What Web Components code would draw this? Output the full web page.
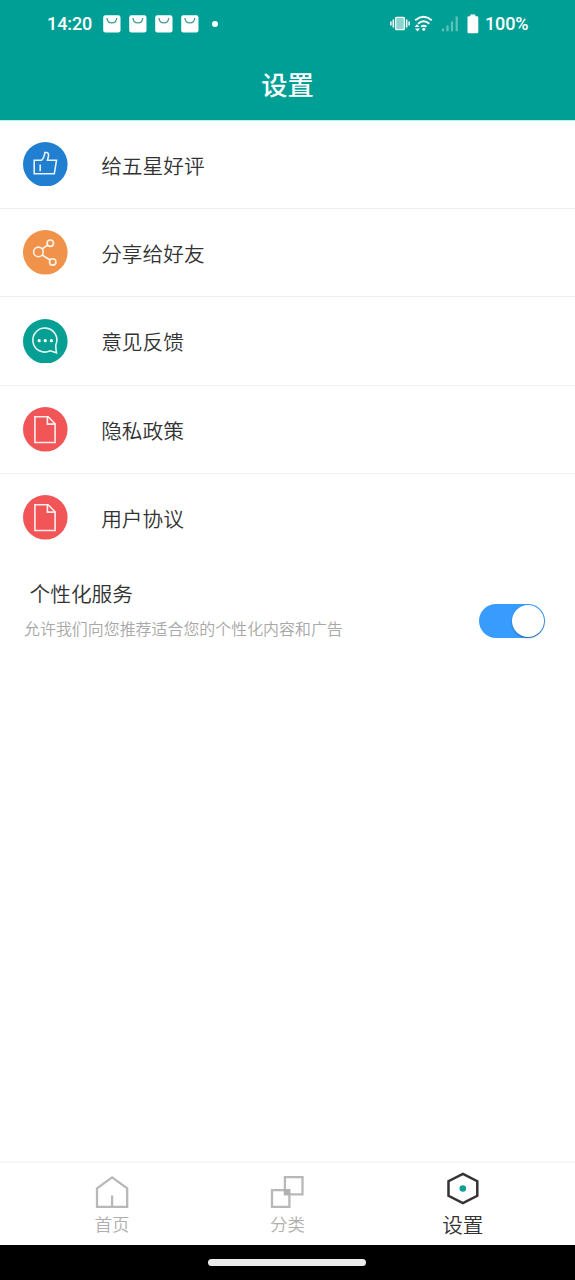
<!DOCTYPE html>
<html lang="zh-CN">
<head>
<meta charset="utf-8">
<title>设置</title>
<style>
html,body{margin:0;height:100%}
body{font-family:"Noto Sans CJK SC",sans-serif;font-weight:350;color:#333;background:#fff;overflow:hidden}
</style>
</head>
<body>
<settings-app></settings-app>
<script>
const define = (name, html) => customElements.define(name, class extends HTMLElement {
  constructor() {
    super();
    this.attachShadow({mode: 'open'}).innerHTML = typeof html === 'function' ? html(this) : html;
  }
});

const bag = `<svg width="18" height="18" viewBox="0 0 18 18"><rect x=".2" y=".2" width="17.3" height="17.3" rx="2.2" fill="#fff"/><path d="M4 3C4.4 9.6 13.3 9.6 13.7 3" fill="none" stroke="#3d9f97" stroke-width="1.3"/></svg>`;

define('status-bar', `
<style>
:host{display:flex;align-items:center;height:47px;padding:0 46.5px 0 47px;color:#fff;font:500 18px/46px Roboto,sans-serif}
svg{display:block;flex:none}
.time{width:56px;letter-spacing:-.1px}
.bags{display:flex;gap:7.9px}
.dot{width:6px;height:6px;border-radius:50%;background:#fff;margin-left:13px}
.right{display:flex;align-items:center;margin-left:auto}
.pct{margin-left:6px;letter-spacing:-.1px}
</style>
<span class="time">14:20</span>
<div class="bags">${bag.repeat(4)}</div>
<i class="dot"></i>
<div class="right">
<svg width="20" height="18" viewBox="0 0 20 18"><rect x="5.6" y="2.3" width="8.8" height="12.4" rx="1" fill="#fff" fill-opacity=".55" stroke="#fff" stroke-width="1.3"/><path d="M3.3 4.5v8M16.7 4.5v8M.9 6.5v4M19.1 6.5v4" stroke="#fff" stroke-width="1.5"/></svg>
<svg style="margin-left:4px" width="19" height="18" viewBox="0 0 19 18"><g fill="none" stroke="#fff" stroke-width="1.8"><path d="M1.2 5.2Q9.5-1.6 17.8 5.2M4 8.7Q9.7 3.8 15.3 8.7M7.2 11.8Q9.8 9.6 12.4 11.8"/></g><circle cx="9.8" cy="14.3" r="1.5" fill="#fff"/><path d="M.5 12L3 9.2 5.5 12zM1 13.5h5L3.5 16.4z" fill="#fff"/></svg>
<svg style="margin-left:8px" width="18" height="18" viewBox="0 0 18 18"><path d="M2 13.4v2.8M6.5 10.5v5.7M11 6.5v9.7M15.7 1.4v14.8" stroke="#62c2b9" stroke-width="2.2"/></svg>
<svg style="margin-left:8px" width="12" height="20" viewBox="0 0 12 20"><path d="M3.3.5h5v1.8h1.7q1.3 0 1.3 1.3v14.3q0 1.3-1.3 1.3H1.8q-1.3 0-1.3-1.3V3.6q0-1.3 1.3-1.3h1.5z" fill="#fff"/></svg>
<span class="pct">100%</span>
</div>`);

define('app-header', `
<style>
:host{display:block;height:121px;background:#009f95;border-bottom:1px solid #b9f2ef;box-sizing:border-box;flex:none}
h1{margin:0;text-align:center;color:#fff;font-size:26.3px;font-weight:500;line-height:74px}
</style>
<status-bar></status-bar><h1><slot></slot></h1>`);

const doc = ['#f15558', '<path d="M11.9 9.8h13.2l7 7v18.7H11.9zM24.4 10.2v6.9h7.4"/>'];
const glyphs = {
  like: ['#217fd2', '<path d="M11.2 18.3h7.2c2-1.5 3-4.5 3.5-7.8h1.9c1.6.3 2 1.8 1.7 3.3l-1 4.5h9l-2.2 13.5H11.2zM17.2 22.6v6.6"/>'],
  share: ['#f1924a', '<circle cx="15.4" cy="21.9" r="4.8"/><circle cx="27.3" cy="13.2" r="3.2"/><circle cx="29.7" cy="32" r="3.2"/><path d="M19.2 18.9l5.4-3.8M19.1 25l7.9 5"/>'],
  chat: ['#069f93', '<path d="M27.2 31.8A12 12 0 1 1 32.8 26q-.2 2 .7 7.8z"/><g fill="#fff" stroke="none"><circle cx="16.2" cy="21.7" r="1.6"/><circle cx="22.2" cy="21.7" r="1.6"/><circle cx="28.4" cy="21.7" r="1.6"/></g>'],
  doc
};

define('setting-row', el => {
  const [color, art] = glyphs[el.getAttribute('icon')];
  return `
<style>
:host{display:flex;align-items:center;height:88.4px;box-sizing:border-box;padding-left:23.2px;border-bottom:1px solid #efefef;font-size:20.7px;line-height:30px}
:host(:last-of-type){border-color:transparent}
svg{display:block;flex:none;margin-right:33.4px}
.art{fill:none;stroke:#fff;stroke-opacity:.9;stroke-width:1.6}
span{padding-top:1px}
</style>
<svg width="44.6" height="44.6" viewBox="0 0 44.6 44.6"><circle cx="22.3" cy="22.3" r="22.3" fill="${color}"/><g class="art">${art}</g></svg>
<span><slot></slot></span>`;
});

define('toggle-switch', `
<style>
:host{display:block;width:66.5px;height:34px;border-radius:17px;background:#389cff;box-sizing:border-box;padding:1px}
i{display:block;width:32px;height:32px;border-radius:50%;background:#fff;margin-left:auto;box-shadow:0 1px 2px rgba(0,0,0,.35)}
</style><i></i>`);

define('personal-service', `
<style>
:host{display:flex;justify-content:space-between;padding:16px 29.7px 0 24px}
.title{font-size:20.7px;line-height:30px;padding-left:5.5px}
.note{font-size:15.95px;line-height:24px;color:#a8a8a8;margin-top:7.6px}
toggle-switch{margin-top:25.4px}
</style>
<div><div class="title"><slot name="title"></slot></div><div class="note"><slot></slot></div></div>
<toggle-switch></toggle-switch>`);

const tabs = {
  home: '<path d="M2 13.4L17.1 2.4l15.1 11v18.4H2zM17.1 32v-11.5" fill="none" stroke="#b8b8b8" stroke-width="2.3"/>',
  grid: '<path d="M14.9 2.2h17.6v17.2H14.9zM2 15.1h17.4v16.8H2z" fill="none" stroke="#b8b8b8" stroke-width="2.3"/><path d="M14 14.3h5.8v5.4H14z" fill="#b0b0b0"/>',
  gear: '<path d="M17.2 2.2L31.6 9.5v14.6L17.2 31.4 2.8 24.1V9.5z" transform="translate(-.3 -.3)" fill="none" stroke="#333" stroke-width="2.5"/><circle cx="16.8" cy="16.5" r="3.3" fill="#0fa095"/>'
};

define('tab-item', el => `
<style>
:host{display:flex;flex-direction:column;align-items:center;justify-content:flex-end;width:175.4px;color:#b0b0b0;font-size:17.5px;line-height:26px;padding-bottom:8px;box-sizing:border-box}
:host([active]){color:#333;font-size:20.6px;line-height:30px;padding-bottom:6.5px}
svg{display:block;margin-bottom:2.5px}
:host([active]) svg{margin-bottom:2.9px}
</style>
<svg width="34.4" height="34" viewBox="0 0 34.4 34">${tabs[el.getAttribute('icon')]}</svg><span><slot></slot></span>`);

define('tab-bar', `
<style>
:host{display:flex;justify-content:center;height:84px;box-sizing:border-box;border-top:2px solid #f6f6f6;background:#fff}
</style><slot></slot>`);

define('gesture-bar', `
<style>
:host{display:flex;justify-content:center;align-items:center;height:35px;background:#000}
i{width:158px;height:6.4px;border-radius:4px;background:#ececec;margin-right:1px}
</style><i></i>`);

define('settings-app', `
<style>
:host{display:flex;flex-direction:column;width:575px;height:1280px}
main{flex:1;min-height:0;margin-top:-.6px}
</style>
<app-header>设置</app-header>
<main>
<section>
<setting-row icon="like">给五星好评</setting-row>
<setting-row icon="share">分享给好友</setting-row>
<setting-row icon="chat">意见反馈</setting-row>
<setting-row icon="doc">隐私政策</setting-row>
<setting-row icon="doc">用户协议</setting-row>
</section>
<personal-service><span slot="title">个性化服务</span>允许我们向您推荐适合您的个性化内容和广告</personal-service>
</main>
<tab-bar>
<tab-item icon="home">首页</tab-item>
<tab-item icon="grid">分类</tab-item>
<tab-item icon="gear" active>设置</tab-item>
</tab-bar>
<gesture-bar></gesture-bar>`);
</script>
</body>
</html>
